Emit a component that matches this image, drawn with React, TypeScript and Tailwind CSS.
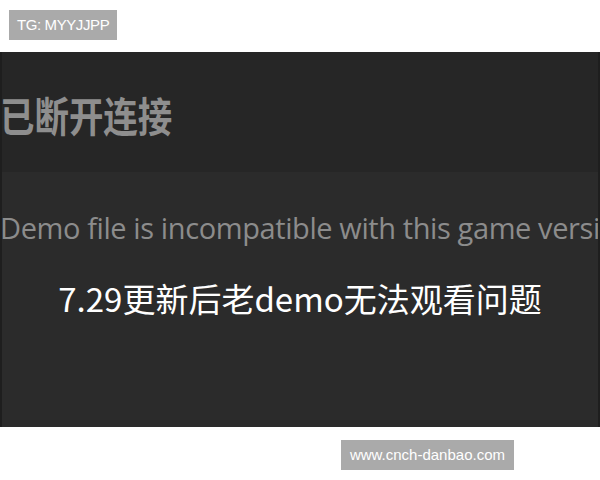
import React from 'react'

const cjk = '"Noto Sans CJK SC", "Noto Sans", sans-serif'

const App: React.FC = () => {
  return (
    <div className="w-[600px] h-[480px] bg-white relative overflow-hidden" style={{ fontFamily: '"Liberation Sans", Arial, sans-serif' }}>
      <div className="h-[52px] pt-[10px] pl-[9px]">
        <span className="inline-flex items-center h-[30px] px-[8px] bg-[#aaaaaa] text-white text-[15px] tracking-[-0.4px]">TG: MYYJJPP</span>
      </div>

      <div className="h-[375px] flex flex-col bg-[#2b2b2b] border-x-2 border-[#1e1e1e] overflow-hidden">
        <div className="h-[120px] bg-[#262626] flex items-center">
          <span className="text-[#8e8e8e] text-[41px] font-bold whitespace-nowrap origin-left scale-x-[0.84] -ml-[2px] mt-[6px]" style={{ fontFamily: cjk }}>
            已断开连接
          </span>
        </div>
        <div className="h-[70px] flex items-end">
          <span className="text-[#8c8c8c] text-[29px] whitespace-nowrap leading-none -ml-[2px] tracking-[-0.4px]" style={{ fontFamily: '"Open Sans", "Noto Sans", sans-serif' }}>
            Demo file is incompatible with this game versi
          </span>
        </div>
        <div className="mt-[40px] flex justify-center">
          <span className="text-white text-[33px] whitespace-nowrap leading-none" style={{ fontFamily: cjk }}>
            7.29更新后老demo无法观看问题
          </span>
        </div>
      </div>

      <div className="flex justify-end pr-[86px] pt-[13px]">
        <span className="inline-flex items-center h-[30px] px-[9px] bg-[#aaaaaa] text-white text-[15px]">www.cnch-danbao.com</span>
      </div>
    </div>
  )
}

export default App
